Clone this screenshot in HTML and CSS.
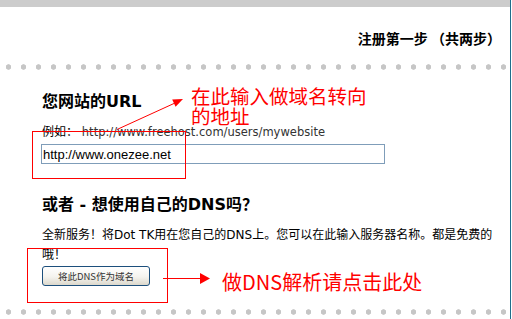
FILE: index.html
```html
<!DOCTYPE html>
<html lang="zh-CN">
<head>
  <meta charset="UTF-8">
  <title>注册第一步</title>
  <link rel="stylesheet" href="styles.css">
</head>
<body>
  <div class="page">
    <div class="topbar"></div>
    <div class="steps">注册第一步 （共两步）</div>
    <div class="dots"></div>

    <div class="section">
      <h2 class="title">您网站的URL</h2>
      <p class="example">例如： <span class="url">http://www.freehost.com/users/mywebsite</span></p>
      <input type="text" class="url-input" value="http://www.onezee.net">

      <h2 class="title title-dns">或者 - 想使用自己的DNS吗？</h2>
      <p class="intro">全新服务！将Dot TK用在您自己的DNS上。您可以在此输入服务器名称。都是免费的哦！</p>
      <button class="dns-btn">将此DNS作为域名</button>
    </div>

    <div class="dots dots-bottom"></div>

    <!-- annotations drawn over the form -->
    <div class="mark mark-url"></div>
    <div class="mark mark-btn"></div>
    <div class="note note-url">在此输入做域名转向<br>的地址</div>
    <div class="note note-btn">做DNS解析请点击此处</div>
    <svg class="arrows" width="512" height="319" viewBox="0 0 512 319">
      <line x1="117" y1="129.5" x2="175" y2="103" stroke="#f00" stroke-width="1"/>
      <polygon points="183,99 175.6,106.8 172.2,99.5" fill="#f00"/>
      <line x1="163" y1="278.5" x2="201" y2="278.5" stroke="#f00" stroke-width="1"/>
      <polygon points="200,273 210,278.5 200,284" fill="#f00"/>
    </svg>
  </div>
</body>
</html>
```

FILE: styles.css
```css
body {
  margin: 0;
  background-color: #ffffff;
  font-family: "DejaVu Sans", "Noto Sans CJK SC", sans-serif;
  color: #000000;
}
.page {
  position: relative;
  width: 510px;
  height: 319px;
  border-right: 1px solid #1f6e8c;
  overflow: hidden;
}
.topbar {
  height: 7px;
  background-color: #cccccc;
}
.steps {
  margin-top: 24px;
  padding-right: 9px;
  text-align: right;
  font-family: "Noto Sans CJK SC", sans-serif;
  font-weight: bold;
  font-size: 14px;
  line-height: 14px;
}
.dots {
  margin-top: 15px;
  height: 14px;
  background-image: radial-gradient(circle at 7.5px 7px, #c6c6c6 2.4px, transparent 3px);
  background-size: 15px 14px;
  background-position: 16px 0;
  background-repeat: repeat-x;
}
.section {
  padding-left: 42px;
}
.title {
  margin: 20px 0 0;
  font-size: 16px;
  line-height: 16px;
  font-weight: bold;
}
.title-dns {
  margin-top: 33px;
}
.example {
  margin: 16px 0 0;
  font-size: 12px;
  line-height: 12px;
}
.url {
  font-size: 11.5px;
  color: #333333;
}
.url-input {
  display: block;
  box-sizing: border-box;
  margin: 6px 0 0 -1px;
  width: 344px;
  height: 20px;
  padding: 0 1px;
  border: 1px solid #7f9db9;
  font-family: "Liberation Sans", Arial, sans-serif;
  font-size: 13px;
  color: #000000;
}
.intro {
  margin: 12px 0 0;
  width: 456px;
  font-size: 12px;
  line-height: 20px;
}
.dns-btn {
  display: block;
  box-sizing: border-box;
  margin-top: 1px;
  width: 108px;
  height: 20px;
  padding: 0;
  border: 1px solid #1c4f7c;
  border-radius: 3px;
  background: linear-gradient(#ffffff, #f4f3ee 55%, #dcd8cc);
  font-family: "Noto Sans CJK SC", sans-serif;
  font-size: 9.5px;
  color: #333333;
}
.dots-bottom {
  margin-top: 19px;
}

/* red annotations */
.mark {
  position: absolute;
  box-sizing: border-box;
  border: 1px solid #ff0000;
}
.mark-url {
  left: 32px;
  top: 131px;
  width: 154px;
  height: 48px;
}
.mark-btn {
  left: 27px;
  top: 248px;
  width: 141px;
  height: 55px;
}
.note {
  position: absolute;
  font-family: "Noto Sans CJK SC", sans-serif;
  color: #ff0000;
}
.note-url {
  left: 191px;
  top: 86px;
  font-size: 19.5px;
  line-height: 19.5px;
}
.note-btn {
  left: 222px;
  top: 272px;
  font-size: 20px;
  line-height: 20px;
}
.arrows {
  position: absolute;
  left: 0;
  top: 0;
}
```
